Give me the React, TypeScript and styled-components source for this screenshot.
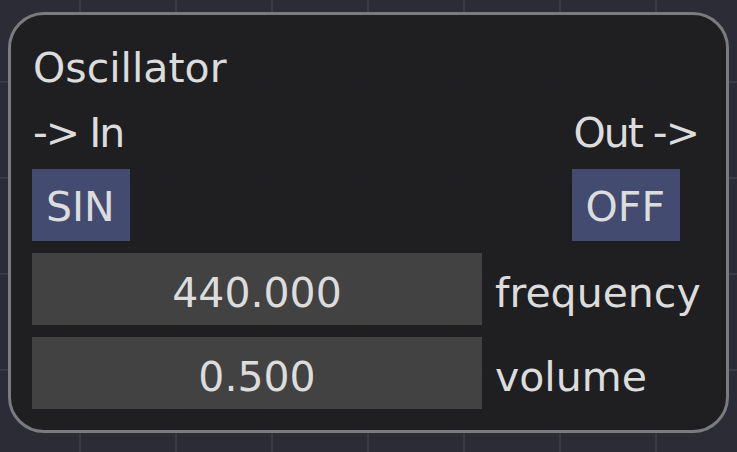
import React from "react";
import styled, { createGlobalStyle } from "styled-components";

const Global = createGlobalStyle`
  html, body {
    margin: 0;
    padding: 0;
    width: 737px;
    height: 452px;
    overflow: hidden;
    background-color: #2c2c37;
    background-image:
      linear-gradient(to right, rgba(70, 70, 80, 0.55) 2px, transparent 2px),
      linear-gradient(to bottom, rgba(70, 70, 80, 0.55) 2px, transparent 2px);
    background-size: 96px 96px;
    background-position: 79px 81px;
    font-family: "DejaVu Sans", "Noto Sans", sans-serif;
  }
`;

const Canvas = styled.div`
  padding: 12px 0 0 8px;
`;

const Node = styled.div`
  box-sizing: border-box;
  width: 721px;
  height: 421px;
  border: 3px solid #7b7b7f;
  border-radius: 36px;
  background: rgba(30, 30, 32, 0.9);
  padding: 28px 25px 21px 21px;
  display: flex;
  flex-direction: column;
  color: #dcdcdc;
  font-size: 41px;
`;

const Title = styled.div`
  line-height: 50px;
  height: 50px;
  margin-bottom: 15px;
  padding-left: 1px;
`;

const PortRow = styled.div`
  display: flex;
  justify-content: space-between;
  line-height: 50px;
  height: 50px;
  margin-bottom: 11px;
`;

const Port = styled.span<{ $right?: boolean }>`
  letter-spacing: -2px;
  padding-left: ${(p) => (p.$right ? "0" : "1px")};
  margin-right: ${(p) => (p.$right ? "3px" : "0")};
  white-space: pre;
`;

const ButtonRow = styled.div`
  display: flex;
  justify-content: space-between;
  margin-bottom: 12px;
`;

const Button = styled.div<{ $mr?: number }>`
  box-sizing: border-box;
  height: 72px;
  display: flex;
  align-items: center;
  padding: 4px 15px 0 14px;
  background: rgba(70, 79, 120, 0.92);
  margin-right: ${(p) => p.$mr ?? 0}px;
`;

const FieldRow = styled.div<{ $last?: boolean }>`
  display: flex;
  align-items: center;
  margin-bottom: ${(p) => (p.$last ? 0 : 12)}px;
`;

const Field = styled.div`
  box-sizing: border-box;
  width: 450px;
  height: 72px;
  padding-top: 7px;
  background: rgba(68, 68, 68, 0.95);
  display: flex;
  align-items: center;
  justify-content: center;
`;

const Label = styled.div`
  box-sizing: border-box;
  height: 72px;
  padding-top: 7px;
  margin-left: 13px;
  display: flex;
  align-items: center;
`;

export default function App() {
  return (
    <>
      <Global />
      <Canvas>
        <Node>
          <Title>Oscillator</Title>
          <PortRow>
            <Port>{"-> In"}</Port>
            <Port $right>{"Out ->"}</Port>
          </PortRow>
          <ButtonRow>
            <Button>SIN</Button>
            <Button $mr={21}>OFF</Button>
          </ButtonRow>
          <FieldRow>
            <Field>440.000</Field>
            <Label>frequency</Label>
          </FieldRow>
          <FieldRow $last>
            <Field>0.500</Field>
            <Label>volume</Label>
          </FieldRow>
        </Node>
      </Canvas>
    </>
  );
}
